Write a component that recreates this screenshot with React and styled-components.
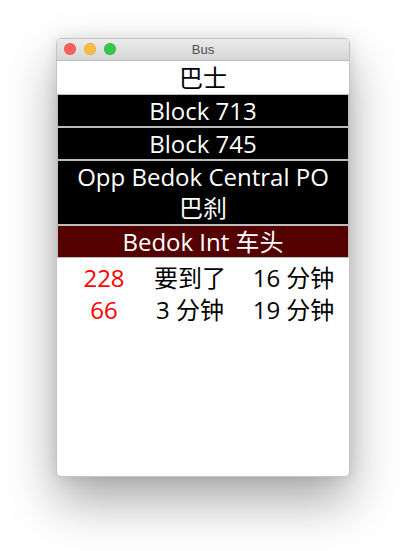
import React from 'react';
import styled, { createGlobalStyle } from 'styled-components';

const GlobalStyle = createGlobalStyle`
  html, body {
    margin: 0;
    padding: 0;
    background: #ffffff;
  }
`;

const Page = styled.div`
  box-sizing: border-box;
  min-height: 551px;
  padding: 38px 0 0 56px;
`;

const Window = styled.div`
  width: 292px;
  height: 437px;
  border: 1px solid #c4c4c4;
  border-radius: 5px;
  background: #ffffff;
  overflow: hidden;
  display: flex;
  flex-direction: column;
  box-shadow: 0 24px 50px rgba(0, 0, 0, 0.34), 0 0 14px rgba(0, 0, 0, 0.1);
`;

const TitleBar = styled.div`
  position: relative;
  height: 21px;
  flex: 0 0 21px;
  background: linear-gradient(#ebebeb, #d6d6d6);
  border-bottom: 1px solid #b9b9b9;
  display: flex;
  align-items: center;
  justify-content: center;
`;

const Lights = styled.div`
  position: absolute;
  left: 7px;
  top: 4px;
  display: flex;
  gap: 8px;
`;

const Light = styled.span`
  width: 12px;
  height: 12px;
  border-radius: 50%;
  background: ${(p) => p.color};
  box-shadow: inset 0 0 0 0.5px rgba(0, 0, 0, 0.15);
`;

const Title = styled.div`
  font-family: "Liberation Sans", Arial, sans-serif;
  font-size: 13px;
  color: #4d4d4d;
`;

const Content = styled.div`
  flex: 1;
  font-family: "Open Sans", "Noto Sans CJK SC", sans-serif;
  font-size: 24px;
`;

const Heading = styled.div`
  height: 33px;
  line-height: 33px;
  text-align: center;
  color: #000;
`;

const Stop = styled.div`
  border: 1px solid #bdbdbd;
  background: ${(p) => (p.$active ? '#550000' : '#000000')};
  color: #ffffff;
  text-align: center;
  line-height: 31px;
  padding: ${(p) => (p.$tall ? '0 0 1px' : '0')};
`;

const Times = styled.div`
  margin-top: 4px;
  padding-left: 11px;
  display: grid;
  grid-template-columns: 72px 100px 107px;
  line-height: 32px;
`;

const Cell = styled.div`
  text-align: center;
  color: ${(p) => (p.$service ? '#ff0000' : '#000000')};
  white-space: nowrap;
`;

const stops = [
  { name: 'Block 713' },
  { name: 'Block 745' },
  { name: 'Opp Bedok Central PO\n巴刹', tall: true },
  { name: 'Bedok Int 车头', active: true },
];

const arrivals = [
  { service: '228', next: '要到了', after: '16 分钟' },
  { service: '66', next: '3 分钟', after: '19 分钟' },
];

const App = () => (
  <Page>
    <GlobalStyle />
    <Window>
      <TitleBar>
        <Lights>
          <Light color="#fc605c" />
          <Light color="#fdbc40" />
          <Light color="#34c84a" />
        </Lights>
        <Title>Bus</Title>
      </TitleBar>
      <Content>
        <Heading>巴士</Heading>
        {stops.map((s) => (
          <Stop key={s.name} $active={s.active} $tall={s.tall}>
            {s.name.split('\n').map((line) => (
              <div key={line}>{line}</div>
            ))}
          </Stop>
        ))}
        <Times>
          {arrivals.map((a) => (
            <React.Fragment key={a.service}>
              <Cell $service>{a.service}</Cell>
              <Cell>{a.next}</Cell>
              <Cell>{a.after}</Cell>
            </React.Fragment>
          ))}
        </Times>
      </Content>
    </Window>
  </Page>
);

export default App;
